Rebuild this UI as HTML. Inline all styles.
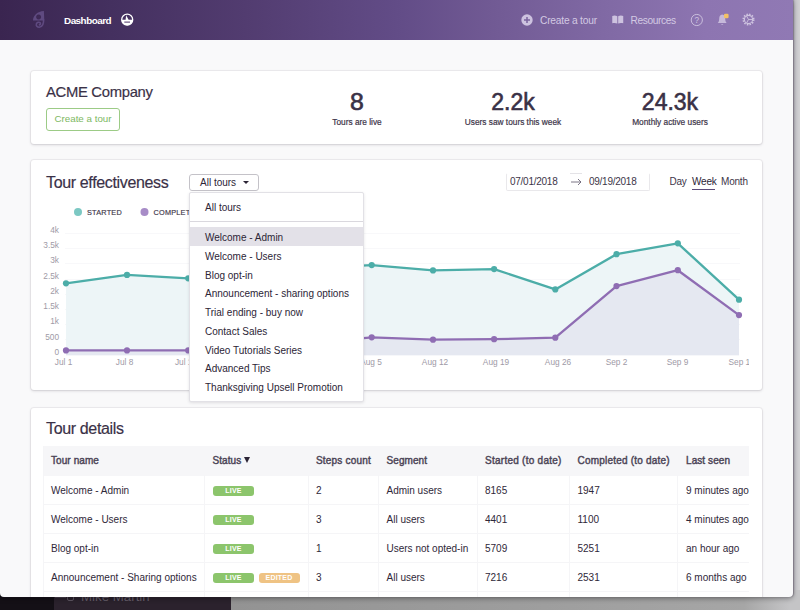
<!DOCTYPE html>
<html lang="en">
<head>
<meta charset="utf-8">
<title>Dashboard</title>
<style>
*{box-sizing:border-box;margin:0;padding:0}
html,body{width:800px;height:610px;overflow:hidden}
body{position:relative;background:#c6c6c6;font-family:"Liberation Sans",sans-serif;color:#2f2839;font-size:10px}
.abs{position:absolute;white-space:nowrap}
/* desktop behind the window */
#desk-black{left:0;top:590px;width:55px;height:20px;background:#141016}
#desk-dark{left:54px;top:590px;width:177px;height:20px;background:#2b222d}
#desk-gray{left:230.500px;top:590px;width:570px;height:20px;background:linear-gradient(90deg,#939393 0,#9e9e9e 55%,#a6a6a6 90%,#c4c4c6 98%)}
#desk-right{left:790px;top:0;width:10px;height:600px;background:linear-gradient(90deg,#c4c3c8 0,#c4c3c8 40%,#d2d2d4 100%)}
#mike{left:81px;top:588.500px;font-size:13.300px;color:#675f6c;line-height:16px;letter-spacing:0}
/* window */
#win{left:0;top:0;width:792.500px;height:596.500px;background:#f9f9fa;overflow:hidden;border-radius:0 0 4px 4px;box-shadow:0 2px 5px rgba(0,0,0,.3),1px 0 1.500px rgba(70,60,85,.45)}
#hdr{left:0;top:0;width:793px;height:40px;background:linear-gradient(90deg,#3a2550 0%,#44305f 14%,#523c70 31%,#624c87 50%,#725b95 63%,#8069a4 76%,#8d75b1 89%,#9079b4 100%)}
.card{background:#fff;border-radius:3px;box-shadow:0 0 0 1px rgba(60,50,70,.06),0 1px 3px rgba(40,30,50,.16)}
.nav{color:#d3c9e3;font-size:10.2px;line-height:12px;top:14.8px}
.h2{font-size:16px;line-height:20px;color:#3a3147;letter-spacing:-.35px;-webkit-text-stroke:.18px #3a3147}
.big{font-size:23px;line-height:26px;color:#3a3146;text-align:center;-webkit-text-stroke:.6px #3a3146}
.sub{font-size:8.3px;line-height:10px;color:#3d3549;text-align:center;-webkit-text-stroke:.2px #3d3549}
.ddi{left:15px;font-size:10px;line-height:12px;color:#2c2536}
.th{font-size:10px;line-height:12px;color:#4b4456;top:9px;letter-spacing:.08px;-webkit-text-stroke:.42px #4b4456}
.td{font-size:10px;line-height:12px;color:#2f2839}
.badge{height:10px;border-radius:3px;color:#fff;font-size:7px;font-weight:bold;line-height:10px;text-align:center;letter-spacing:.2px}
.live{background:#8cc56c;width:41px}
.edited{background:#efc384;width:41px}
.vl{width:1px;background:#f5f5f7;top:0;height:160px}
.hl{height:1px;background:#f5f5f7;left:0;width:706px}
</style>
</head>
<body>
<div class="abs" id="desk-right"></div>
<div class="abs" id="desk-black"></div>
<div class="abs" id="desk-dark"></div>
<div class="abs" id="desk-gray"></div>
<div class="abs" style="left:55px;top:597px;width:11px;height:1px;background:#4a414d"></div>
<div class="abs" style="left:66.500px;top:593px;width:7.500px;height:8px;border:1.200px solid #5d5562;border-radius:2px"></div>
<div class="abs" id="mike">Mike Martin</div>

<div class="abs" id="win">
  <div class="abs" id="hdr">
    <!-- logo -->
    <svg class="abs" style="left:30px;top:8px" width="18" height="22" viewBox="30 8 18 22">
      <path fill-rule="evenodd" d="M33 20.600C33 15.500 37.500 11.400 43.900 11L44.300 20.600L40.500 20.600C39.500 20.300 38.500 20.300 37.500 20.600ZM38.600 14.400a2.500 2.500 0 1 0 .01 0Z" fill="#5f4a80"/>
      <path d="M43.500 19.500C44 23 42.500 27.200 39.300 27.200C37 27.200 36 25.600 36.300 24.200C36.600 22.600 38.300 21.800 39.600 22.400C40.800 23 40.700 24.600 39.500 24.900" fill="none" stroke="#5f4a80" stroke-width="1.600" stroke-linecap="round"/>
    </svg>
    <div class="abs" style="left:64px;top:13.800px;font-size:9.900px;line-height:13px;font-weight:bold;color:#fff;letter-spacing:-.5px">Dashboard</div>
    <!-- speed / dashboard icon -->
    <svg class="abs" style="left:120px;top:12px" width="15" height="15" viewBox="120 12 15 15">
      <circle cx="127.200" cy="19.700" r="5.500" fill="none" stroke="#fff" stroke-width="1.300"/>
      <path d="M121.700 19.800h11a5.500 5.500 0 0 1-11 0z" fill="#fff"/>
      <path d="M125.600 20L126.100 15.300L128.700 20z" fill="#fff"/>
      <path d="M124.300 22.100h5.700" stroke="#4a3165" stroke-width="1"/>
    </svg>
    <!-- plus circle -->
    <svg class="abs" style="left:520.800px;top:13.600px" width="12" height="12" viewBox="0 0 12 12">
      <circle cx="6" cy="6" r="5.700" fill="#cdc2df"/>
      <path d="M6 3v6M3 6h6" stroke="#7a639e" stroke-width="1.500"/>
    </svg>
    <div class="abs nav" style="left:540px;letter-spacing:-.2px">Create a tour</div>
    <!-- book -->
    <svg class="abs" style="left:612px;top:15px" width="11.500" height="9.200" viewBox="0 0 13 11" preserveAspectRatio="none">
      <path d="M.3 1.200C2.200.3 4.300.4 6 1.500v8.800C4.300 9.300 2.200 9.200.3 10z" fill="#cdc2df"/>
      <path d="M12.700 1.200C10.800.3 8.700.4 7 1.500v8.800c1.700-1 3.800-1.100 5.700-.3z" fill="#cdc2df"/>
    </svg>
    <div class="abs nav" style="left:630.500px;letter-spacing:-.4px">Resources</div>
    <!-- help -->
    <svg class="abs" style="left:690px;top:12.500px" width="14" height="14" viewBox="0 0 14 14">
      <circle cx="6.800" cy="7" r="5.600" fill="none" stroke="#c9bddc" stroke-width="1"/>
      <text x="6.800" y="9.900" text-anchor="middle" font-family="Liberation Sans, sans-serif" font-size="8.200" fill="#cfc4e0">?</text>
    </svg>
    <!-- bell -->
    <svg class="abs" style="left:715px;top:11.800px" width="16" height="17" viewBox="0 0 16 17">
      <path d="M7.200 2.600c-2 .2-3 1.800-3 3.900 0 2.200-.5 3.600-1.500 4.600h9c-1-1-1.500-2.400-1.500-4.600 0-2.100-1-3.700-3-3.900z" fill="#c6b9da"/>
      <path d="M6 12.300a1.300 1.300 0 0 0 2.400 0z" fill="#c6b9da"/>
      <rect x="9" y="1.800" width="4.600" height="4.400" rx="1.300" fill="#f2c165"/>
    </svg>
    <!-- gear -->
    <svg class="abs" style="left:741.400px;top:11.800px" width="15" height="15" viewBox="0 0 15 15">
      <circle cx="7.500" cy="7.500" r="4.100" fill="none" stroke="#cfc4e0" stroke-width="1.100"/>
      <circle cx="7.500" cy="7.500" r="5.300" fill="none" stroke="#cfc4e0" stroke-width="1.500" stroke-dasharray="1.500 1.275"/>
      <path d="M7.500 7.500h3.800M7.500 7.500l-1.900-3.400M7.500 7.500l-1.900 3.400" stroke="#cfc4e0" stroke-width=".9"/>
    </svg>
  </div>

  <!-- card 1 -->
  <div class="abs card" style="left:31px;top:71px;width:731px;height:73px">
    <div class="abs h2" style="left:15px;top:11px;letter-spacing:-.3px;font-size:14.800px">ACME Company</div>
    <div class="abs" style="left:15px;top:37.300px;width:74px;height:22.500px;border:1px solid #9ccb86;border-radius:3px;color:#7db862;font-size:9.800px;line-height:20px;text-align:center">Create a tour</div>
    <div class="abs big" style="left:276px;width:100px;top:17.500px;transform:scaleX(1.08)">8</div>
    <div class="abs sub" style="left:276px;width:100px;top:46px">Tours are live</div>
    <div class="abs big" style="left:432px;width:100px;top:17.500px">2.2k</div>
    <div class="abs sub" style="left:412px;width:140px;top:46px">Users saw tours this week</div>
    <div class="abs big" style="left:589px;width:100px;top:17.500px">24.3k</div>
    <div class="abs sub" style="left:569px;width:140px;top:46px">Monthly active users</div>
  </div>

  <!-- card 2 -->
  <div class="abs card" style="left:31px;top:160px;width:731px;height:230px;overflow:hidden">
    <div class="abs h2" style="left:15px;top:12.800px">Tour effectiveness</div>
    <div class="abs" style="left:158px;top:14px;width:70px;height:17px;border:1px solid #c4c2c8;border-radius:3px"></div>
    <div class="abs" style="left:169px;top:16px;font-size:10px;line-height:13px;color:#2c2536">All tours</div>
    <div class="abs" style="left:212px;top:21px;width:0;height:0;border-left:3px solid transparent;border-right:3px solid transparent;border-top:3.500px solid #2c2536"></div>
    <!-- date range -->
    <div class="abs" style="left:475px;top:13px;width:144px;height:18px;border:1px solid #e9e8eb;border-top-color:transparent;border-radius:2px"></div>
    <div class="abs" style="left:479px;top:16px;font-size:10px;letter-spacing:-.26px;line-height:12px;color:#3d3549">07/01/2018</div>
    <div class="abs" style="left:539px;top:13px;width:12px;height:1px;background:#e4e3e7"></div>
    <svg class="abs" style="left:540px;top:18px" width="11" height="8" viewBox="0 0 11 8"><path d="M0 4h10M7 1l3 3-3 3" fill="none" stroke="#6d6678" stroke-width=".9"/></svg>
    <div class="abs" style="left:558px;top:16px;font-size:10px;letter-spacing:-.26px;line-height:12px;color:#3d3549">09/19/2018</div>
    <div class="abs" style="left:638.500px;top:16px;font-size:10px;line-height:12px;color:#3d3549;letter-spacing:-.3px">Day</div>
    <div class="abs" style="left:661px;top:16px;font-size:10px;line-height:12px;color:#2c2536;letter-spacing:-.2px">Week</div>
    <div class="abs" style="left:661px;top:29px;width:23px;height:1px;background:#5b4a78"></div>
    <div class="abs" style="left:690px;top:16px;font-size:10px;line-height:12px;color:#3d3549;letter-spacing:-.2px">Month</div>
    <!-- chart -->
    <svg class="abs" style="left:0;top:0" width="717.500" height="230" viewBox="31 160 717.500 230" font-family="Liberation Sans, sans-serif">
      <g stroke="#f8f8fa" stroke-width="1">
        <path d="M65 233.500H740M65 248.500H740M65 263.500H740M65 279.500H740M65 294.500H740M65 309.500H740M65 324.500H740M65 339.500H740"/>
      </g>
      <circle cx="78" cy="212" r="4" fill="#7cc8c3"/>
      <text x="87" y="214.800" font-size="7.300" fill="#3d3549" stroke="#3d3549" stroke-width=".15" letter-spacing=".22">STARTED</text>
      <circle cx="144.500" cy="212" r="4" fill="#a78cc7"/>
      <text x="153.500" y="214.800" font-size="7.300" fill="#3d3549" stroke="#3d3549" stroke-width=".15" letter-spacing=".22">COMPLETED</text>
      <g font-size="8.300" fill="#9e9aa6" text-anchor="end">
        <text x="59" y="233">4k</text><text x="59" y="248.200">3.5k</text><text x="59" y="263.400">3k</text><text x="59" y="278.600">2.5k</text><text x="59" y="293.900">2k</text><text x="59" y="308.900">1.5k</text><text x="59" y="324.300">1k</text><text x="59" y="339.500">500</text><text x="59" y="354.500">0</text>
      </g>
      <g font-size="8.300" fill="#9e9aa6" text-anchor="middle">
        <text x="63.600" y="365.300">Jul 1</text><text x="124.600" y="365.300">Jul 8</text><text x="186" y="365.300">Jul 15</text><text x="371" y="365.300">Aug 5</text><text x="435" y="365.300">Aug 12</text><text x="496" y="365.300">Aug 19</text><text x="558" y="365.300">Aug 26</text><text x="616.500" y="365.300">Sep 2</text><text x="677.500" y="365.300">Sep 9</text>
        <text x="728.500" y="365.300" text-anchor="start">Sep 16</text>
      </g>
      <!-- teal area + line -->
      <path d="M66 283.300L127 274.900L188.200 278.300L249.300 272L310.500 268L371.700 265.100L433 270.400L494.100 269.100L555.300 289.400L616.500 254.200L677.800 243.300L739 299.700V355.200H66z" fill="#edf5f7"/>
      <path d="M66 350.400L127 350.400L188.200 350.400L249.300 348L310.500 343L371.700 337.300L433 339.700L494.100 339.200L555.300 337.700L616.500 286.100L677.800 270.200L739 315.100V355.200H66z" fill="#e5e8f1"/>
      <path d="M66 283.300L127 274.900L188.200 278.300L249.300 272L310.500 268L371.700 265.100L433 270.400L494.100 269.100L555.300 289.400L616.500 254.200L677.800 243.300L739 299.700" fill="none" stroke="#4cada8" stroke-width="2.350" stroke-linejoin="round"/>
      <path d="M66 350.400L127 350.400L188.200 350.400L249.300 348L310.500 343L371.700 337.300L433 339.700L494.100 339.200L555.300 337.700L616.500 286.100L677.800 270.200L739 315.100" fill="none" stroke="#8f6db3" stroke-width="2.350" stroke-linejoin="round"/>
      <g fill="#4cada8">
        <circle cx="66" cy="283.300" r="3.100"/><circle cx="127" cy="274.900" r="3.100"/><circle cx="188.200" cy="278.300" r="3.100"/><circle cx="371.700" cy="265.100" r="3.100"/><circle cx="433" cy="270.400" r="3.100"/><circle cx="494.100" cy="269.100" r="3.100"/><circle cx="555.300" cy="289.400" r="3.100"/><circle cx="616.500" cy="254.200" r="3.100"/><circle cx="677.800" cy="243.300" r="3.100"/><circle cx="739" cy="299.700" r="3.100"/>
      </g>
      <g fill="#8f6db3">
        <circle cx="66" cy="350.400" r="3.100"/><circle cx="127" cy="350.400" r="3.100"/><circle cx="188.200" cy="350.400" r="3.100"/><circle cx="371.700" cy="337.300" r="3.100"/><circle cx="433" cy="339.700" r="3.100"/><circle cx="494.100" cy="339.200" r="3.100"/><circle cx="555.300" cy="337.700" r="3.100"/><circle cx="616.500" cy="286.100" r="3.100"/><circle cx="677.800" cy="270.200" r="3.100"/><circle cx="739" cy="315.100" r="3.100"/>
      </g>
    </svg>
  </div>

  <!-- card 3 -->
  <div class="abs card" style="left:31px;top:408px;width:731px;height:200px">
    <div class="abs h2" style="left:15px;top:10.500px">Tour details</div>
    <div class="abs" style="left:12px;top:38px;width:706px;height:160px;overflow:hidden">
      <div class="abs" style="left:0;top:0;width:706px;height:29.500px;background:#f6f6f8"></div>
      <div class="abs th" style="left:8px">Tour name</div>
      <div class="abs th" style="left:169.500px">Status</div>
      <div class="abs" style="left:201px;top:11px;width:0;height:0;border-left:3px solid transparent;border-right:3px solid transparent;border-top:6px solid #2c2536"></div>
      <div class="abs th" style="left:273px;letter-spacing:.2px">Steps count</div>
      <div class="abs th" style="left:343.500px">Segment</div>
      <div class="abs th" style="left:442px;letter-spacing:.26px">Started (to date)</div>
      <div class="abs th" style="left:534.500px;letter-spacing:.2px">Completed (to date)</div>
      <div class="abs th" style="left:643px">Last seen</div>
      <div class="abs vl" style="left:0"></div>
      <div class="abs vl" style="left:160.500px;top:29px"></div>
      <div class="abs vl" style="left:264.500px;top:29px"></div>
      <div class="abs vl" style="left:335px;top:29px"></div>
      <div class="abs vl" style="left:433.500px;top:29px"></div>
      <div class="abs vl" style="left:526px;top:29px"></div>
      <div class="abs vl" style="left:634px;top:29px"></div>
      <div class="abs hl" style="top:58.300px"></div>
      <div class="abs hl" style="top:87.200px"></div>
      <div class="abs hl" style="top:116px"></div>
      <div class="abs hl" style="top:144.700px"></div>
      <!-- row 1 -->
      <div class="abs td" style="left:8px;top:38.800px">Welcome - Admin</div>
      <div class="abs badge live" style="left:170px;top:40px">LIVE</div>
      <div class="abs td" style="left:273px;top:38.800px">2</div>
      <div class="abs td" style="left:343.500px;top:38.800px">Admin users</div>
      <div class="abs td" style="left:442px;top:38.800px">8165</div>
      <div class="abs td" style="left:534.500px;top:38.800px">1947</div>
      <div class="abs td" style="left:643px;top:38.800px">9 minutes ago</div>
      <!-- row 2 -->
      <div class="abs td" style="left:8px;top:68.100px">Welcome - Users</div>
      <div class="abs badge live" style="left:170px;top:68.900px">LIVE</div>
      <div class="abs td" style="left:273px;top:68.100px">3</div>
      <div class="abs td" style="left:343.500px;top:68.100px">All users</div>
      <div class="abs td" style="left:442px;top:68.100px">4401</div>
      <div class="abs td" style="left:534.500px;top:68.100px">1100</div>
      <div class="abs td" style="left:643px;top:68.100px">4 minutes ago</div>
      <!-- row 3 -->
      <div class="abs td" style="left:8px;top:97px">Blog opt-in</div>
      <div class="abs badge live" style="left:170px;top:97.800px">LIVE</div>
      <div class="abs td" style="left:273px;top:97px">1</div>
      <div class="abs td" style="left:343.500px;top:97px">Users not opted-in</div>
      <div class="abs td" style="left:442px;top:97px">5709</div>
      <div class="abs td" style="left:534.500px;top:97px">5251</div>
      <div class="abs td" style="left:643px;top:97px">an hour ago</div>
      <!-- row 4 -->
      <div class="abs td" style="left:8px;top:125.900px">Announcement - Sharing options</div>
      <div class="abs badge live" style="left:170px;top:126.700px">LIVE</div>
      <div class="abs badge edited" style="left:215.500px;top:126.700px">EDITED</div>
      <div class="abs td" style="left:273px;top:125.900px">3</div>
      <div class="abs td" style="left:343.500px;top:125.900px">All users</div>
      <div class="abs td" style="left:442px;top:125.900px">7216</div>
      <div class="abs td" style="left:534.500px;top:125.900px">2531</div>
      <div class="abs td" style="left:643px;top:125.900px">6 months ago</div>
    </div>
  </div>

  <!-- dropdown menu -->
  <div class="abs" style="left:189px;top:192px;width:175px;height:210px;background:#fff;border:1px solid #e2e1e6;border-radius:2px;box-shadow:0 1px 3px rgba(40,30,50,.12)">
    <div class="abs ddi" style="top:9px">All tours</div>
    <div class="abs" style="left:0;top:27.800px;width:172.500px;height:1px;background:#dad8de"></div>
    <div class="abs" style="left:0;top:34px;width:172.500px;height:19px;background:#e3e1e8"></div>
    <div class="abs ddi" style="top:38.700px">Welcome - Admin</div>
    <div class="abs ddi" style="top:57.800px">Welcome - Users</div>
    <div class="abs ddi" style="top:76.500px">Blog opt-in</div>
    <div class="abs ddi" style="top:95.300px">Announcement - sharing options</div>
    <div class="abs ddi" style="top:114.000px">Trial ending - buy now</div>
    <div class="abs ddi" style="top:132.800px">Contact Sales</div>
    <div class="abs ddi" style="top:151.500px">Video Tutorials Series</div>
    <div class="abs ddi" style="top:170.300px">Advanced Tips</div>
    <div class="abs ddi" style="top:188.800px">Thanksgiving Upsell Promotion</div>
  </div>
</div>
</body>
</html>
